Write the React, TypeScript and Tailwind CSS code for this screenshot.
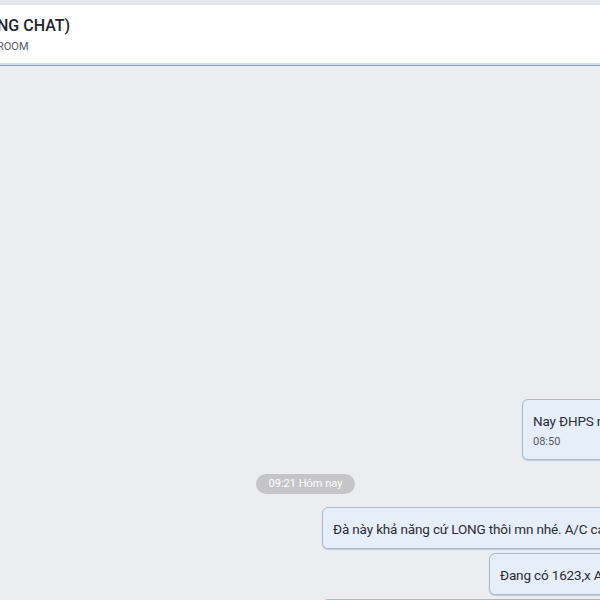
const font = "font-['Roboto','Noto_Sans',sans-serif]"

function Bubble({ width, text, time }: { width: string; text: string; time?: string }) {
  return (
    <div
      className={`${width} self-end rounded-[6px] border border-[#a7b9d3] bg-[#e6eefa] px-[10px] pt-[11px] pb-[9px] shadow-[0_1px_1px_rgba(90,110,140,0.25)] overflow-hidden whitespace-nowrap`}
    >
      <div className="text-[13.5px] leading-[20px] tracking-[-0.15px] text-[#2a2d33]">{text}</div>
      {time && <div className="mt-[3px] text-[11px] leading-[16px] text-[#555b66]">{time}</div>}
    </div>
  )
}

export default function App() {
  return (
    <div className={`w-[600px] h-[600px] overflow-hidden bg-[#ecedf0] ${font}`}>
      <div className="h-[5px] bg-[#e6e7eb]" />
      <div className="h-[58px] bg-white flex flex-col justify-center -ml-[3px]">
        <div className="text-[16px] leading-[20px] font-medium text-[#22252b] mt-[2px]">NG CHAT)</div>
        <div className="text-[11px] leading-[14px] text-[#555a63] mt-[4px]">ROOM</div>
      </div>
      <div className="h-[2px] bg-[#d4deeb]" />
      <div className="h-px bg-[#8d9db6]" />
      <div className="w-[700px] flex flex-col pt-[333px]">
        <Bubble width="w-[178px]" text="Nay ĐHPS nghỉ giao dịch" time="08:50" />
        <div className="ml-[256px] mt-[14px] w-[99px] h-[20px] rounded-full bg-[#c5c5c7] flex items-center justify-center text-[11px] text-white">
          09:21 Hôm nay
        </div>
        <div className="mt-[13px] flex flex-col gap-[4px]">
          <Bubble width="w-[378px]" text="Đà này khả năng cứ LONG thôi mn nhé. A/C canh điểm vào" />
          <Bubble width="w-[211px]" text="Đang có 1623,x A/C nhé" />
          <Bubble width="w-[378px]" text="Mục tiêu 1630" />
        </div>
      </div>
    </div>
  )
}
